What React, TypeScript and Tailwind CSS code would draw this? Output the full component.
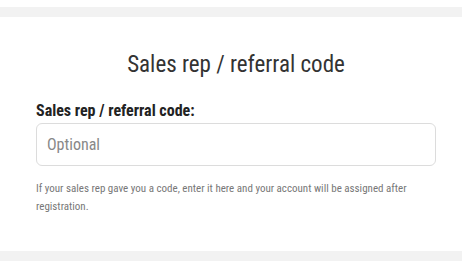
export default function App() {
  return (
    <div className="flex min-h-screen flex-col gap-[10px] bg-[#f2f2f2] font-['Roboto_Condensed','Roboto',sans-serif] text-[#333]">
      <div className="h-[7px] bg-white" />

      <div className="h-[234px] bg-white pt-[33px] pr-[26px] pl-[36px]">
        <h2 className="text-center text-[23px] leading-[30px] font-normal text-[#333]">
          Sales rep / referral code
        </h2>

        <label className="mt-[21px] block text-[16px] leading-[20px] font-bold text-[#222]">
          Sales rep / referral code:
        </label>
        <input
          type="text"
          placeholder="Optional"
          className="mt-[2px] block h-[43px] w-full rounded-[6px] border border-[#dcdcdc] bg-white px-[10px] text-[16px] text-[#333] outline-none placeholder:text-[#888]"
        />

        <p className="mt-[14px] text-[11px] leading-[18px] text-[#777]">
          If your sales rep gave you a code, enter it here and your account will be assigned after
          registration.
        </p>
      </div>

      <div className="flex-1 bg-white" />
    </div>
  );
}
